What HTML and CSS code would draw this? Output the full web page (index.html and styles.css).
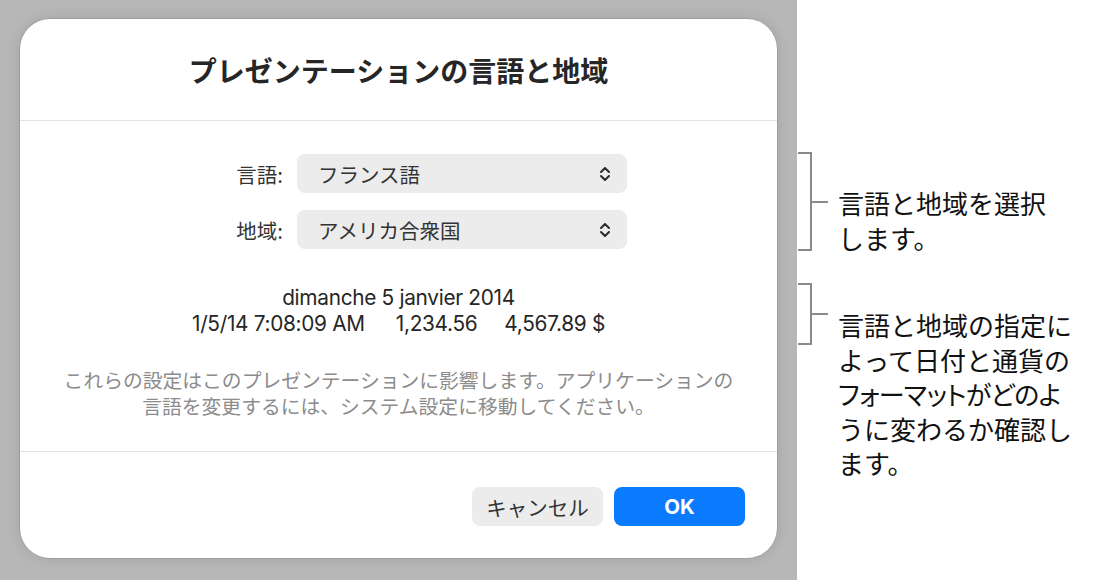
FILE: index.html
```html
<!DOCTYPE html>
<html lang="ja">
<head>
<meta charset="utf-8">
<link rel="stylesheet" href="styles.css">
</head>
<body>
<div class="stage">
  <div class="dialog">
    <div class="header">
      <h1 class="title">プレゼンテーションの言語と地域</h1>
    </div>
    <div class="content">
      <div class="form">
        <div class="label">言語:</div>
        <div class="popup"><span>フランス語</span>
          <svg class="chev" viewBox="0 0 12 18" width="12" height="18"><path d="M2 7 L6 3 L10 7 M2 11 L6 15 L10 11" fill="none" stroke="#2b2b2b" stroke-width="2" stroke-linecap="round" stroke-linejoin="round"/></svg>
        </div>
        <div class="label">地域:</div>
        <div class="popup"><span>アメリカ合衆国</span>
          <svg class="chev" viewBox="0 0 12 18" width="12" height="18"><path d="M2 7 L6 3 L10 7 M2 11 L6 15 L10 11" fill="none" stroke="#2b2b2b" stroke-width="2" stroke-linecap="round" stroke-linejoin="round"/></svg>
        </div>
      </div>
      <div class="sample">
        <div>dimanche 5 janvier 2014</div>
        <div><span>1/5/14 7:08:09 AM</span><span class="g1">1,234.56</span><span class="g2">4,567.89 $</span></div>
      </div>
      <div class="note">
        <div class="nline">これらの設定はこのプレゼンテーションに影響します。アプリケーションの</div>
        <div class="nline">言語を変更するには、システム設定に移動してください。</div>
      </div>
    </div>
    <div class="footer">
      <button class="btn cancel">キャンセル</button>
      <button class="btn ok">OK</button>
    </div>
  </div>
</div>
<div class="notes">
  <div class="callout c1">
    <div class="bracket b1"><span class="tick"></span></div>
    <div class="ctext">言語と地域を選択<br>します。</div>
  </div>
  <div class="callout c2">
    <div class="bracket b2"><span class="tick"></span></div>
    <div class="ctext">言語と地域の指定に<br>よって日付と通貨の<br><span class="prop">フォーマットがどのよ</span><br>うに変わるか確認し<br>ます。</div>
  </div>
</div>
</body>
</html>
```
FILE: styles.css
```css
* { box-sizing: border-box; }
html, body { margin: 0; padding: 0; }
body {
  width: 1093px;
  height: 580px;
  display: flex;
  background: #fff;
  font-family: Inter, "Noto Sans CJK JP", sans-serif;
  overflow: hidden;
}
.stage {
  width: 797px;
  height: 580px;
  background: #b7b7b7;
  padding: 19px 20px 0 20px;
}
.dialog {
  width: 757px;
  height: 539px;
  background: #fff;
  border-radius: 30px;
  box-shadow: 0 0 14px rgba(0,0,0,0.12), 0 0 0 0.5px rgba(0,0,0,0.15);
  display: flex;
  flex-direction: column;
}
.header {
  height: 102px;
  border-bottom: 1.5px solid #e4e4e4;
  display: flex;
  align-items: center;
  justify-content: center;
}
.title {
  margin: 0;
  font-family: "Noto Sans CJK JP", sans-serif;
  font-weight: 700;
  font-size: 28px;
  color: #262626;
  line-height: 1;
}
.content {
  height: 331px;
  border-bottom: 1.5px solid #e4e4e4;
  padding-top: 33px;
  display: flex;
  flex-direction: column;
  align-items: center;
}
.form {
  display: grid;
  grid-template-columns: 113px 330px;
  column-gap: 14px;
  row-gap: 17px;
  align-items: center;
}
.label {
  text-align: right;
  font-family: "Noto Sans CJK JP", sans-serif;
  font-size: 20.5px;
  color: #333;
}
.popup {
  height: 39px;
  background: #ececec;
  border-radius: 8px;
  display: flex;
  align-items: center;
  justify-content: space-between;
  padding: 0 16px 0 21px;
  font-family: "Noto Sans CJK JP", sans-serif;
  font-size: 20.5px;
  color: #333;
}
.chev { display: block; }
.sample {
  margin-top: 36px;
  text-align: center;
  font-size: 20.8px;
  line-height: 26px;
  color: #262626;
  letter-spacing: -0.3px;
}
.g1 { margin-left: 31px; }
.g2 { margin-left: 27px; }
.note {
  margin-top: 30px;
  text-align: center;
  font-family: "Noto Sans CJK JP", sans-serif;
  font-size: 19.8px;
  color: #8c8c8c;
  white-space: nowrap;
}
.nline { height: 26px; line-height: 26px; }
.footer {
  flex: 1;
  display: flex;
  justify-content: flex-end;
  align-items: flex-start;
  padding: 35px 32px 0 0;
  gap: 11px;
}
.btn {
  width: 131px;
  height: 39px;
  border: none;
  border-radius: 8px;
  font-size: 20.5px;
  padding: 0;
  display: flex;
  align-items: center;
  justify-content: center;
}
.cancel {
  background: #ececec;
  color: #333;
  font-family: "Noto Sans CJK JP", sans-serif;
}
.ok {
  background: #0a7aff;
  color: #fff;
  font-family: Inter, sans-serif;
  font-weight: 700;
}
.notes {
  flex: 1;
}
.callout {
  display: flex;
  align-items: flex-start;
}
.c1 { margin-top: 152px; }
.c2 { margin-top: 28px; }
.bracket {
  width: 14px;
  margin-left: 1px;
  border: 2px solid #8a8a8a;
  border-left: none;
  position: relative;
}
.b1 { height: 99px; }
.b2 { height: 62px; }
.tick {
  position: absolute;
  left: 12px;
  top: 50%;
  width: 18px;
  height: 2px;
  margin-top: -1px;
  background: #8a8a8a;
}
.ctext {
  margin-left: 26px;
  font-family: "Noto Sans CJK JP", sans-serif;
  font-size: 26px;
  color: #111;
  white-space: nowrap;
}
.prop { font-feature-settings: "palt"; letter-spacing: -0.6px; }
.c1 .ctext { margin-top: 33px; line-height: 35px; }
.c2 .ctext { margin-top: 25px; line-height: 34.5px; }
```
